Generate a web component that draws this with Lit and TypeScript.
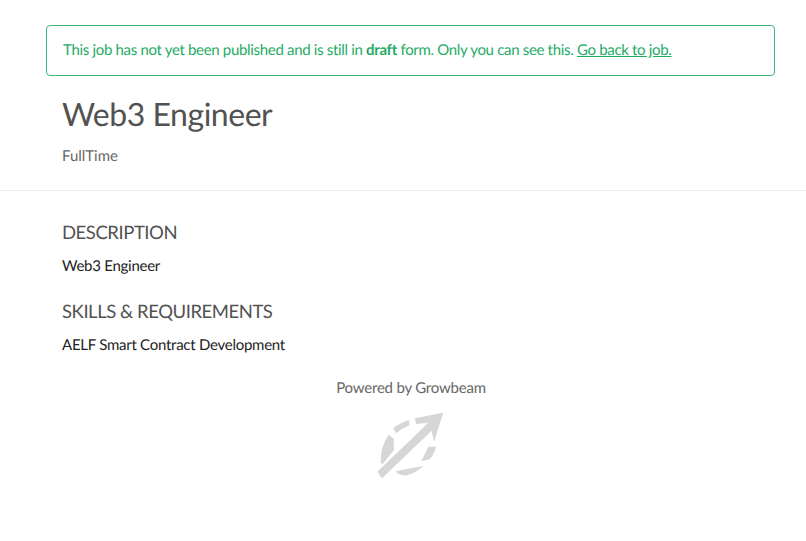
import { LitElement, html, css } from "lit";
import { customElement } from "lit/decorators.js";

@customElement("app-root")
export class AppRoot extends LitElement {
  static styles = css`
    :host { display: block; width: 806px; height: 541px; background: #fff; font-family: Lato, sans-serif; overflow: hidden; text-rendering: geometricPrecision; }
    .alert-wrap { padding: 25px 31px 0 46px; }
    .alert { height: 51px; box-sizing: border-box; border: 1px solid #3fb67b; border-radius: 4px; padding: 0 16px 1px; display: flex; align-items: center; color: #1fab66; font-size: 15px; letter-spacing: -0.32px; white-space: pre; }
    .alert a { color: inherit; text-decoration: underline; }
    .head { padding: 18px 62px 0; box-sizing: border-box; border-bottom: 1px solid #ececec; height: 115px; }
    h1 { margin: 0; font-size: 32px; line-height: 40px; font-weight: 400; color: #525252; letter-spacing: -0.47px; }
    .type { margin-top: 12px; font-size: 15px; line-height: 20px; color: #666; }
    .body { padding: 29px 62px 0; }
    h2 { margin: 0; font-size: 18.5px; line-height: 24px; font-weight: 400; color: #525252; letter-spacing: -0.45px; }
    p { margin: 12px 0 0; font-size: 15px; line-height: 20px; color: #222; letter-spacing: -0.26px; }
    .skills { margin-top: 23px; }
    .foot { margin-top: 23px; display: flex; flex-direction: column; align-items: center; }
    .powered { font-size: 15px; line-height: 20px; color: #666; letter-spacing: -0.21px; margin-left: 16px; }
    svg { display: block; margin-top: 2px; margin-left: 14px; filter: blur(0.5px); }
  `;

  render() {
    return html`
      <div class="alert-wrap">
        <div class="alert"><span>This job has not yet been published and is still in <b>draft</b> form. Only you can see this. <a href="#">Go back to job.</a></span></div>
      </div>
      <div class="head">
        <h1>Web3 Engineer</h1>
        <div class="type">FullTime</div>
      </div>
      <div class="body">
        <h2>DESCRIPTION</h2>
        <p>Web3 Engineer</p>
        <h2 class="skills">SKILLS &amp; REQUIREMENTS</h2>
        <p>AELF Smart Contract Development</p>
      </div>
      <div class="foot">
        <div class="powered">Powered by Growbeam</div>
        <svg width="100" height="90" viewBox="0 0 300 270" fill="#d6d6d6">
          <path d="M250 38 L165 55 L168 72 L205 68 L52 215 L66 235 L215 92 L222 125 Z" />
          <path d="M148 60 Q120 68 100 85 L108 100 Q128 84 148 76 Z" />
          <path d="M86 104 Q60 140 62 190 L68 192 L102 150 Q100 130 102 116 Z" />
          <path d="M205 140 L228 140 Q222 165 208 178 L184 184 Z" />
          <path d="M106 214 L190 198 Q170 218 140 226 Q118 228 106 214 Z" />
        </svg>
      </div>
    `;
  }
}
